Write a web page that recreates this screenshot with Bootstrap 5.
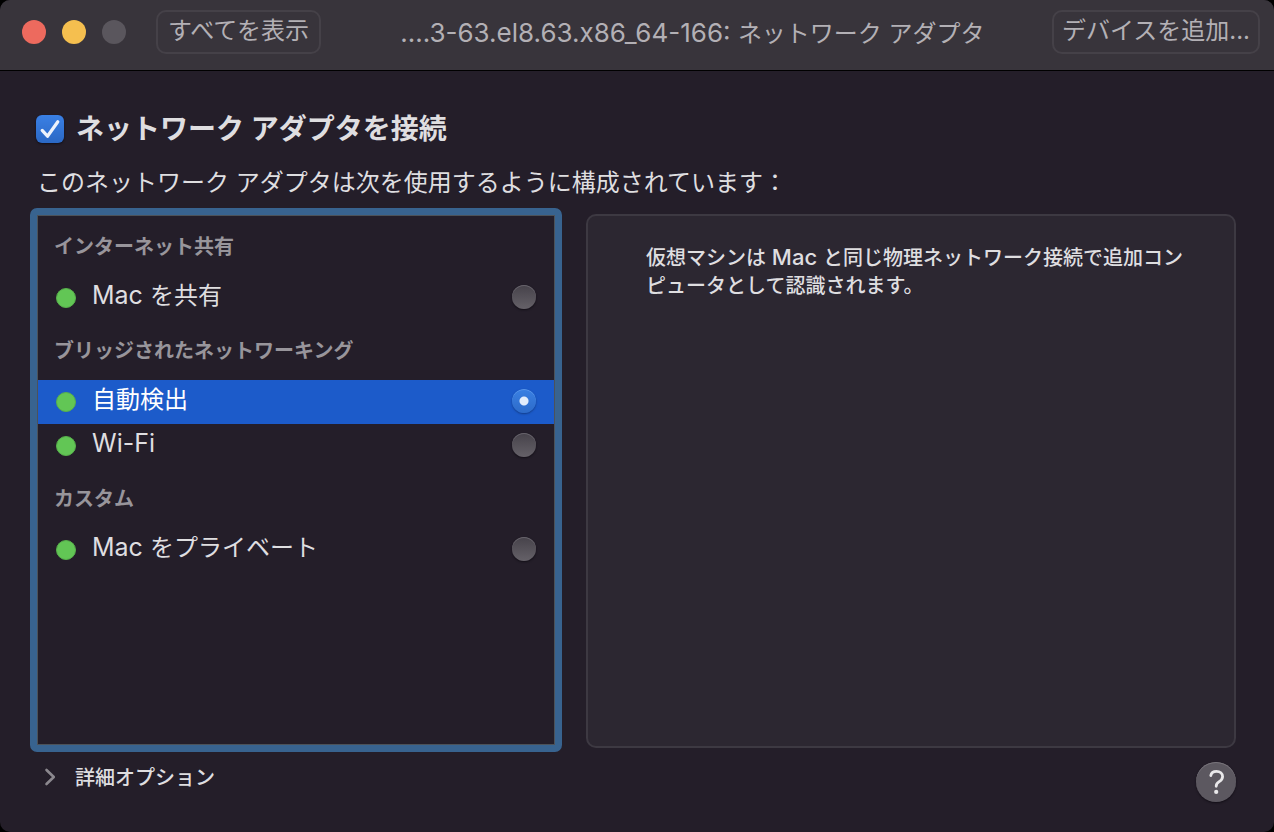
<!DOCTYPE html>
<html lang="ja" data-bs-theme="dark">
<head>
<meta charset="utf-8">
<meta name="viewport" content="width=device-width, initial-scale=1">
<title>ネットワーク アダプタ</title>
<link href="https://cdn.jsdelivr.net/npm/bootstrap@5.3.0/dist/css/bootstrap.min.css" rel="stylesheet">
<style>
  body { background: #000; color: #dfdee0; font-family: Inter, "Noto Sans CJK JP", sans-serif; font-size: 24px; line-height: 32px; }
  .settings-window { background: #241e29; border-radius: 10px; overflow: hidden; }
  .title-bar { background: #38343b; border-bottom: 1px solid #000; height: 71px; padding: 10px 14px 16px 22px; }
  .title-bar h1 { color: #b3b0b5; font-size: 24px; line-height: 32px; padding: 3px 0 0 12px; }
  .title-bar .latin { font-size: 26px; }
  .latin { font-size: 25px; line-height: 1; }
  .info .latin { font-size: 22px; }
  .light { width: 24px; height: 24px; border: 0; padding: 0; border-radius: 50%; }
  .light-close { background: #ed6a5e; }
  .light-min { background: #f5bf4f; }
  .light-off { background: #5a565d; }
  .bar-btn { --bs-btn-color: #b3b0b5; --bs-btn-border-color: #454148; --bs-btn-border-width: 2px; --bs-btn-border-radius: 10px; --bs-btn-font-size: 24px; --bs-btn-padding-x: 8px; --bs-btn-padding-y: 0; --bs-btn-line-height: 32px; --bs-btn-hover-color: #fff; height: 44px; padding-bottom: 2px; white-space: nowrap; }
  .show-all { --bs-btn-padding-x: 10px; margin-left: 30px; }
  .pane { padding: 42px 38px 30px 30px; }
  .connect { padding-left: 6px; gap: 12px; }
  .connect label { font-size: 28px; line-height: 32px; }
  .connect .form-check-input { width: 28px; height: 28px; border: 0; border-radius: 6px; background-color: #2e71d6; box-shadow: 0 1px 2px #120e16;
    background-image: url("data:image/svg+xml,%3Csvg xmlns='http://www.w3.org/2000/svg' viewBox='0 0 28 28'%3E%3Cpath fill='none' stroke='%23eef3fb' stroke-width='3.2' stroke-linecap='round' stroke-linejoin='round' d='M6.2 15.4 11.5 21.2 21.8 6.8'/%3E%3C/svg%3E"), linear-gradient(#3a80e5, #2b68c4); background-size: 100%; }
  .intro { padding: 22px 0 9px 7px; }
  .adapter-list { flex: 0 1 532px; border: 7px solid #38638f; border-radius: 7px; }
  .adapter-inner { border: 1px solid #4c5259; height: 100%; }
  .group-title { height: 60px; padding: 0 16px; font-size: 20px; line-height: 62px; color: #98959b; }
  .adapter { height: 44px; padding: 0 18px; }
  .adapter label { padding-bottom: 5px; margin-left: 16px; }
  .adapter.chosen { background: #1c5bca; color: #fff; }
  .status-dot { width: 20px; height: 20px; border-radius: 50%; background: #62c655; border: 1px solid #57b04b; }
  .adapter .form-check-input { width: 24px; height: 24px; border: 0; margin: 0 0 2px; background: linear-gradient(#46424a, #656168); box-shadow: 0 1px 2px #120e16, inset 0 1px 0 #67636b; }
  .adapter .form-check-input:checked { background: radial-gradient(circle, #e3edfb 4px, transparent 5px), linear-gradient(#3a80e3, #2d6bc9); box-shadow: 0 1px 2px #123b86, inset 0 1px 0 #5a96ea; }
  .info { margin: 6px 0 4px; background: #2c2731; border: 2px solid #3d3942; border-radius: 10px; padding: 28px 40px 28px 58px; font-size: 20px; line-height: 28px; font-weight: 500; }
  .foot { padding-top: 10px; }
  .details-btn { font-size: 20px; line-height: 32px; font-weight: 500; color: #dfdee0; background: none; border: 0; padding: 0 0 0 14px; gap: 18px; }
  .details-btn svg { margin-bottom: 2px; }
  .help-btn { width: 40px; height: 40px; border: 0; border-radius: 50%; background: #5c5860; box-shadow: 0 1px 2px #120e16, inset 0 1px 0 #78747b; padding: 0; }
</style>
</head>
<body>
<div class="settings-window min-vh-100 d-flex flex-column">
  <header class="title-bar d-flex align-items-center">
    <div class="d-flex gap-3">
      <button class="light light-close" type="button" aria-label="閉じる"></button>
      <button class="light light-min" type="button" aria-label="しまう"></button>
      <button class="light light-off" type="button" aria-label="拡大" disabled></button>
    </div>
    <button class="btn bar-btn show-all me-auto" type="button">すべてを表示</button>
    <h1 class="fw-normal text-nowrap mb-0"><span class="latin">....3-63.el8.63.x86_64-166: </span>ネットワーク アダプタ</h1>
    <button class="btn bar-btn ms-auto" type="button">デバイスを追加...</button>
  </header>
  <main class="pane flex-grow-1 d-flex flex-column">
    <div class="connect d-flex align-items-center">
      <input class="form-check-input m-0" type="checkbox" id="connect" checked>
      <label class="fw-bold" for="connect">ネットワーク アダプタを接続</label>
    </div>
    <p class="intro mb-0">このネットワーク アダプタは次を使用するように構成されています：</p>
    <div class="flex-grow-1 d-flex gap-4">
      <div class="adapter-list" role="radiogroup" aria-label="接続方法">
        <div class="adapter-inner">
          <div class="group-title fw-bold">インターネット共有</div>
          <div class="adapter d-flex align-items-center">
            <span class="status-dot"></span>
            <label class="flex-grow-1" for="share"><span class="latin">Mac </span>を共有</label>
            <input class="form-check-input" type="radio" name="adapter" id="share">
          </div>
          <div class="group-title fw-bold">ブリッジされたネットワーキング</div>
          <div class="adapter chosen d-flex align-items-center">
            <span class="status-dot"></span>
            <label class="flex-grow-1" for="auto">自動検出</label>
            <input class="form-check-input" type="radio" name="adapter" id="auto" checked>
          </div>
          <div class="adapter d-flex align-items-center">
            <span class="status-dot"></span>
            <label class="flex-grow-1" for="wifi"><span class="latin">Wi-Fi</span></label>
            <input class="form-check-input" type="radio" name="adapter" id="wifi">
          </div>
          <div class="group-title fw-bold">カスタム</div>
          <div class="adapter d-flex align-items-center">
            <span class="status-dot"></span>
            <label class="flex-grow-1" for="private"><span class="latin">Mac </span>をプライベート</label>
            <input class="form-check-input" type="radio" name="adapter" id="private">
          </div>
        </div>
      </div>
      <section class="info flex-fill w-50">
        <p class="mb-0">仮想マシンは<span class="latin"> Mac </span>と同じ物理ネットワーク接続で追加コンピュータとして認識されます。</p>
      </section>
    </div>
    <div class="foot d-flex justify-content-between align-items-start">
      <button class="details-btn d-flex align-items-center" type="button">
        <svg width="13" height="18" viewBox="0 0 13 18" fill="none" stroke="#8b888e" stroke-width="2.6" stroke-linecap="round" stroke-linejoin="round" aria-hidden="true"><path d="M2.500 2 9.800 9 2.500 16"/></svg>
        詳細オプション
      </button>
      <button class="help-btn d-flex align-items-center justify-content-center" type="button" aria-label="ヘルプ">
        <svg width="40" height="40" viewBox="0 0 40 40" fill="none" stroke="#e9e8ea" stroke-width="2.800" stroke-linecap="round" aria-hidden="true"><path d="M14.800 13.600C15.300 10.700 17.600 9.300 20.500 9.300 24 9.300 26.600 11.500 26.600 14.600 26.600 17.200 25.200 18.400 23.200 19.700 21 21.100 20.200 22 20.200 24.300"/><circle cx="20.200" cy="29.900" r="2.100" fill="#e9e8ea" stroke="none"/></svg>
      </button>
    </div>
  </main>
</div>
<script src="https://cdn.jsdelivr.net/npm/bootstrap@5.3.0/dist/js/bootstrap.bundle.min.js"></script>
</body>
</html>
